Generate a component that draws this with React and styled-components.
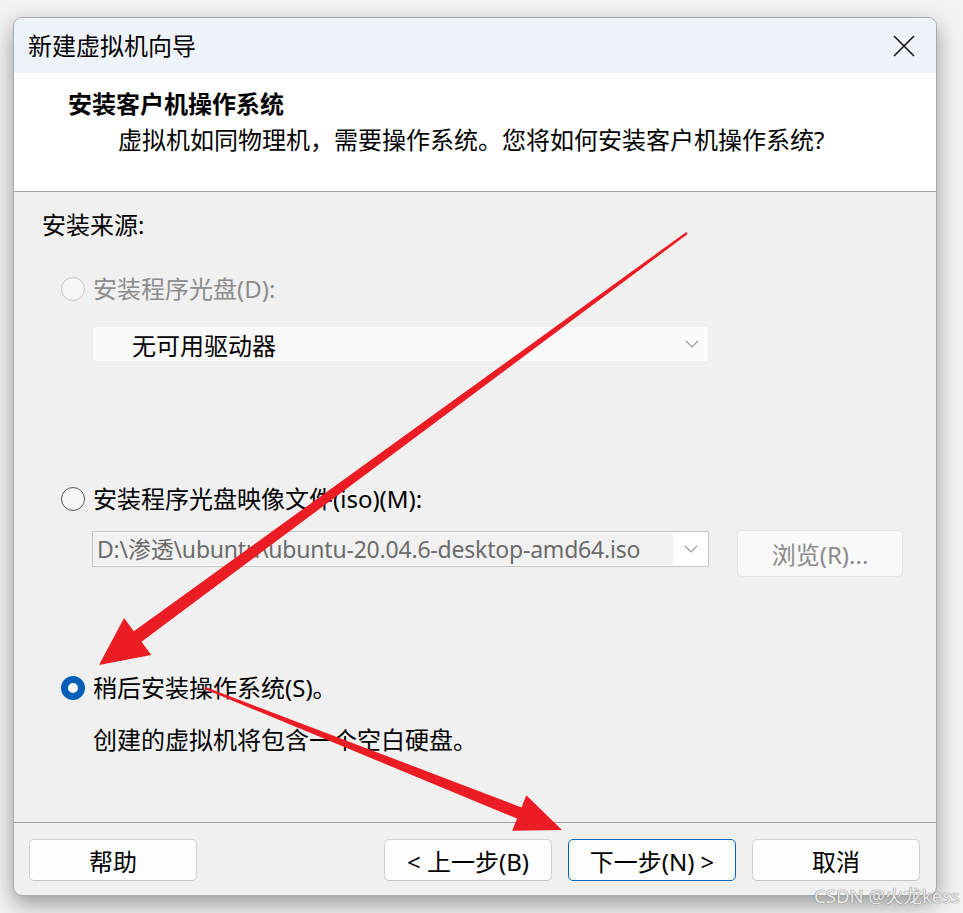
import React, { useState } from "react";
import styled, { createGlobalStyle } from "styled-components";

const GlobalStyle = createGlobalStyle`
  html, body {
    margin: 0;
    padding: 0;
    background: #f3f3f3;
  }
  * {
    box-sizing: border-box;
  }
`;

const FONT = `"Noto Sans", "Noto Sans CJK SC", sans-serif`;

function Chevron() {
  return (
    <svg width="14" height="8" viewBox="0 0 14 8">
      <path d="M1 1 L7 7 L13 1" fill="none" stroke="#9a9a9a" strokeWidth="1.2" />
    </svg>
  );
}

function CloseIcon() {
  return (
    <svg width="22" height="22" viewBox="0 0 22 22">
      <path d="M1 1 L21 21 M21 1 L1 21" stroke="#1a1a1a" strokeWidth="1.7" />
    </svg>
  );
}

// 화살표: 꼬리는 얇고 머리 쪽으로 갈수록 두꺼워진다
function arrowPoints(tail, tip, tailW, shaftW, headLen, headW) {
  const dx = tip[0] - tail[0];
  const dy = tip[1] - tail[1];
  const len = Math.sqrt(dx * dx + dy * dy);
  const ux = dx / len;
  const uy = dy / len;
  const nx = -uy;
  const ny = ux;
  const bx = tip[0] - ux * headLen;
  const by = tip[1] - uy * headLen;
  const pts = [
    [tail[0] + nx * tailW, tail[1] + ny * tailW],
    [bx + nx * shaftW, by + ny * shaftW],
    [bx + nx * headW, by + ny * headW],
    tip,
    [bx - nx * headW, by - ny * headW],
    [bx - nx * shaftW, by - ny * shaftW],
    [tail[0] - nx * tailW, tail[1] - ny * tailW],
  ];
  return pts.map((p) => p.join(",")).join(" ");
}

function Arrows() {
  return (
    <ArrowLayer width="963" height="913" viewBox="0 0 963 913">
      <polygon
        points={arrowPoints([687, 233], [99, 665], 1.2, 6.5, 48, 23)}
        fill="#ec1c24"
      />
      <polygon
        points={arrowPoints([205, 688], [562, 830], 1.2, 6, 46, 19)}
        fill="#ec1c24"
      />
    </ArrowLayer>
  );
}

function App() {
  const [choice, setChoice] = useState("later");

  return (
    <>
      <GlobalStyle />
      <Page>
        <Window>
          <TitleBar>
            <TitleText>新建虚拟机向导</TitleText>
            <CloseButton>
              <CloseIcon />
            </CloseButton>
          </TitleBar>

          <Header>
            <Heading>安装客户机操作系统</Heading>
            <SubHeading>
              虚拟机如同物理机，需要操作系统。您将如何安装客户机操作系统?
            </SubHeading>
          </Header>

          <Body>
            <SectionLabel>安装来源:</SectionLabel>

            <OptionRow $top={32} $disabled>
              <Radio $state="disabled" />
              <span>安装程序光盘(D):</span>
            </OptionRow>
            <DiscSelect>
              <span>无可用驱动器</span>
              <Chevron />
            </DiscSelect>

            <OptionRow $top={121} onClick={() => setChoice("iso")}>
              <Radio $state={choice === "iso" ? "checked" : "off"} />
              <span>安装程序光盘映像文件(iso)(M):</span>
            </OptionRow>
            <IsoRow>
              <IsoCombo>
                <IsoText>D:\渗透\ubuntu\ubuntu-20.04.6-desktop-amd64.iso</IsoText>
                <ComboArrow>
                  <Chevron />
                </ComboArrow>
              </IsoCombo>
              <BrowseButton>浏览(R)...</BrowseButton>
            </IsoRow>

            <OptionRow $top={95} onClick={() => setChoice("later")}>
              <Radio $state={choice === "later" ? "checked" : "off"} />
              <span>稍后安装操作系统(S)。</span>
            </OptionRow>
            <Description>创建的虚拟机将包含一个空白硬盘。</Description>
          </Body>

          <Footer>
            <Button>帮助</Button>
            <Spacer />
            <Button>&lt; 上一步(B)</Button>
            <Button $primary>下一步(N) &gt;</Button>
            <Button>取消</Button>
          </Footer>
        </Window>

        <Arrows />
        <Watermark>CSDN @火龙kess</Watermark>
      </Page>
    </>
  );
}

export default App;

const Page = styled.div`
  position: relative;
  width: 963px;
  height: 913px;
  overflow: hidden;
  padding: 17px 0 0 13px;
  font-family: ${FONT};
  color: #000;
`;

const Window = styled.div`
  width: 924px;
  border: 1px solid #a9a9a9;
  border-radius: 9px;
  overflow: hidden;
  background: #f0f0f0;
  box-shadow: 0 8px 22px rgba(0, 0, 0, 0.38);
`;

const TitleBar = styled.div`
  height: 55px;
  display: flex;
  align-items: center;
  justify-content: space-between;
  padding: 0 21px 0 14px;
  background: #eef3fa;
`;

const TitleText = styled.div`
  font-size: 24px;
  line-height: 30px;
`;

const CloseButton = styled.div`
  display: flex;
  align-items: center;
`;

const Header = styled.div`
  height: 119px;
  background: #ffffff;
  padding: 15px 0 0 54px;
  border-bottom: 1px solid #a0a0a0;
`;

const Heading = styled.div`
  font-size: 24px;
  line-height: 32px;
  font-weight: 700;
`;

const SubHeading = styled.div`
  font-size: 24px;
  line-height: 32px;
  margin-top: 4px;
  padding-left: 50px;
`;

const Body = styled.div`
  height: 631px;
  padding: 17px 0 0 28px;
  display: flex;
  flex-direction: column;
  align-items: flex-start;
  border-bottom: 1px solid #a0a0a0;
`;

const SectionLabel = styled.div`
  font-size: 24px;
  line-height: 32px;
`;

const OptionRow = styled.div`
  display: flex;
  align-items: center;
  gap: 8px;
  margin-top: ${(p) => p.$top}px;
  margin-left: 19px;
  font-size: 24px;
  line-height: 32px;
  color: ${(p) => (p.$disabled ? "#8c8c8c" : "#000")};
  cursor: ${(p) => (p.$disabled ? "default" : "pointer")};
`;

const Radio = styled.span`
  width: 24px;
  height: 24px;
  border-radius: 50%;
  flex-shrink: 0;
  background: ${(p) => (p.$state === "checked" ? "#ffffff" : "#f6f6f6")};
  border: ${(p) =>
    p.$state === "checked"
      ? "7px solid #005fb8"
      : p.$state === "disabled"
      ? "1.5px solid #c6c6c6"
      : "1.5px solid #555555"};
`;

const DiscSelect = styled.div`
  margin: 21px 0 0 50px;
  width: 617px;
  height: 36px;
  display: flex;
  align-items: center;
  justify-content: space-between;
  padding: 0 9px 0 39px;
  background: #fafafa;
  border: 1px solid #ececec;
  font-size: 24px;
`;

const IsoRow = styled.div`
  display: flex;
  align-items: flex-start;
  gap: 28px;
  margin: 15px 0 0 50px;
`;

const IsoCombo = styled.div`
  margin-top: 1px;
  width: 617px;
  height: 36px;
  display: flex;
  border: 1px solid #c4c4c4;
  background: #ffffff;
`;

const IsoText = styled.div`
  flex: 1;
  padding-left: 4px;
  margin: 1px 0;
  background: #f1f1f1;
  color: #6b6b6b;
  font-size: 23px;
  letter-spacing: -0.2px;
  line-height: 32px;
  white-space: nowrap;
  overflow: hidden;
`;

const ComboArrow = styled.div`
  width: 35px;
  display: flex;
  align-items: center;
  justify-content: center;
`;

const BrowseButton = styled.div`
  width: 166px;
  height: 47px;
  display: flex;
  align-items: center;
  justify-content: center;
  background: #f9f9f9;
  border: 1px solid #e5e5e5;
  border-radius: 4px;
  color: #8a8a8a;
  font-size: 24px;
`;

const Description = styled.div`
  margin: 20px 0 0 51px;
  font-size: 24px;
  line-height: 32px;
`;

const Footer = styled.div`
  display: flex;
  gap: 16px;
  padding: 16px 16px 14px 15px;
`;

const Spacer = styled.div`
  flex: 1;
`;

const Button = styled.div`
  width: 168px;
  height: 42px;
  display: flex;
  align-items: center;
  justify-content: center;
  background: #fdfdfd;
  border: 1px solid ${(p) => (p.$primary ? "#0067c0" : "#d3d3d3")};
  border-bottom-color: ${(p) => (p.$primary ? "#0067c0" : "#c4c4c4")};
  border-radius: 5px;
  font-size: 24px;
  color: #000;
`;

const ArrowLayer = styled.svg`
  position: absolute;
  top: 0;
  left: 0;
  pointer-events: none;
`;

const Watermark = styled.div`
  position: absolute;
  right: 3px;
  bottom: 5px;
  font-family: ${FONT};
  font-size: 18.5px;
  color: #ececec;
  text-shadow: 0 0 1px #7a7a7a, 0 0 1px #7a7a7a;
`;
